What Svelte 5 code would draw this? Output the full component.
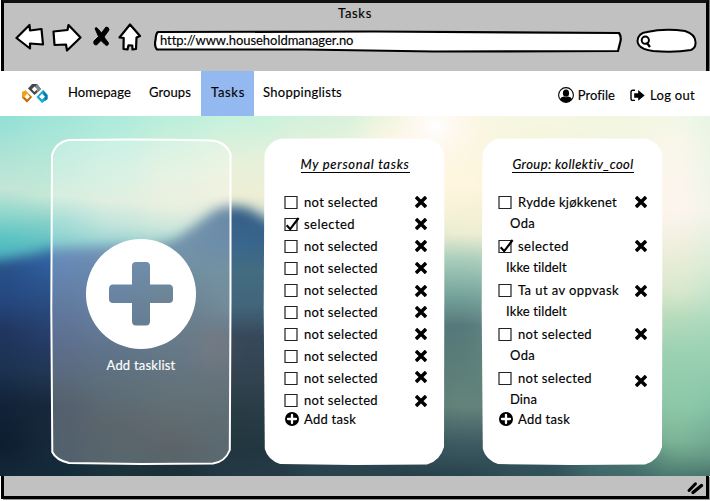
<script>
  const personal = [
    ['not selected', false, 0], ['selected', true, 0], ['not selected', false, 0],
    ['not selected', false, -0.5], ['not selected', false, 0.5], ['not selected', false, 0],
    ['not selected', false, 0], ['not selected', false, 0], ['not selected', false, -1], ['not selected', false, 1]
  ].map(([label, done, dy]) => ({ label, done, dy, width: done ? 51 : 74 }));

  const group = [
    { label: 'Rydde kjøkkenet', width: 99, who: 'Oda', whoWidth: 25, left: 28, dy: 0 },
    { label: 'selected', width: 51, done: true, who: 'Ikke tildelt', whoWidth: 61, left: 24, dy: 0 },
    { label: 'Ta ut av oppvask', width: 101, who: 'Ikke tildelt', whoWidth: 61, left: 24, dy: 1 },
    { label: 'not selected', width: 74, who: 'Oda', whoWidth: 25, left: 28, dy: 0 },
    { label: 'not selected', width: 74, who: 'Dina', whoWidth: 27, left: 28, dy: 3 }
  ];

  // Vertical colour ramps of the blurred landscape: [x, width, [[y, colour], ...]]
  const sky = [
    [-60, 85, [[0, '#91dfd5'], [45, '#b2e3d5'], [72, '#c3e5d8'], [95, '#94d8ce'], [120, '#5dc5c3'], [145, '#48afbd']]],
    [25, 60, [[0, '#9fe5d9'], [55, '#bae8d7'], [80, '#c8e8d5'], [105, '#88d1c9'], [130, '#5dbfc0']]],
    [85, 60, [[0, '#acebdc'], [55, '#c9eddc'], [85, '#d6ead5'], [108, '#aedbd0'], [130, '#75c4c0']]],
    [145, 60, [[0, '#bbefdc'], [60, '#e0efd9'], [90, '#e4ead5'], [110, '#bfe0cf'], [130, '#82c5c0']]],
    [205, 80, [[0, '#c6f2dd'], [45, '#e6f0da'], [80, '#eeeed4'], [100, '#c9dfcf']]],
    [285, 80, [[0, '#d5f1dc'], [90, '#fff4d8'], [150, '#7ba9a0'], [210, '#4c6f76'], [360, '#29434d']]],
    [365, 65, [[0, '#f0f6e0'], [30, '#fff7e7'], [100, '#fff3d8'], [143, '#a9cebc'], [175, '#7ba9a0'], [210, '#55787b'], [290, '#536f6d'], [325, '#38535b'], [360, '#263f49']]],
    [430, 65, [[0, '#faf7e4'], [70, '#fff6de'], [118, '#ecedd1'], [143, '#a9cebc'], [175, '#7ba9a0'], [210, '#55787b'], [245, '#5b7d78'], [290, '#64837b'], [325, '#405d63'], [360, '#29434d']]],
    [495, 80, [[0, '#f6f7e1'], [120, '#f4efd2'], [180, '#8ab5a2'], [300, '#547a75'], [340, '#314f59'], [360, '#30505a']]],
    [575, 75, [[0, '#f2f6e1'], [120, '#f5f1df'], [210, '#b1d6b3'], [310, '#78ac91'], [345, '#456e6d'], [360, '#416969']]],
    [650, 48, [[0, '#f3f8e6'], [30, '#fcf7ec'], [95, '#fff5ef'], [130, '#f0efdd'], [175, '#dce9cd'], [205, '#b4dabb'], [240, '#98d1b2'], [290, '#8ecaa9'], [325, '#7eb898'], [345, '#639681'], [360, '#4a7c72']]],
    [698, 80, [[0, '#e4f4e4'], [95, '#f0f4e8'], [150, '#d6ebd6'], [210, '#a7d8bb'], [290, '#84c2a5'], [340, '#659987'], [360, '#467168']]]
  ];
  const hill = [
    [-60, 85, [[130, '#35679b'], [150, '#295088'], [185, '#244680'], [215, '#20345d'], [250, '#1b3352'], [290, '#112138'], [330, '#0e1c2f'], [360, '#13283a']]],
    [25, 60, [[125, '#3c6faa'], [150, '#2f5e9d'], [190, '#294b7e'], [230, '#253b66'], [260, '#203650'], [290, '#18283b'], [360, '#132a3a']]],
    [85, 60, [[120, '#4673a2'], [150, '#3b628f'], [200, '#31547a'], [235, '#284462'], [270, '#263d4c'], [310, '#233038'], [360, '#1b333b']]],
    [145, 60, [[110, '#426f90'], [150, '#416a86'], [190, '#385668'], [240, '#30495b'], [290, '#2c3e45'], [330, '#252f37'], [360, '#193039']]],
    [205, 90, [[85, '#345b83'], [125, '#38658d'], [155, '#436c80'], [190, '#42657a'], [220, '#37485b'], [265, '#32424e'], [300, '#273b44'], [335, '#213640'], [360, '#233a45']]],
    [295, 160, [[100, '#345b83'], [190, '#42657a'], [220, '#37485b'], [360, '#29434d']]]
  ];

  // Spreads the letters so that a label takes its designed width.
  function fit(node, width) {
    const adjust = () => {
      node.style.letterSpacing = '0px';
      const extra = width - node.getBoundingClientRect().width;
      node.style.letterSpacing = extra / node.textContent.length + 'px';
    };
    adjust();
    document.fonts?.ready.then(adjust);
  }
</script>

{#snippet label(text, width)}<span class="label" use:fit={width}>{text}</span>{/snippet}

{#snippet checkbox(done)}
  <svg class="box" width="16" height="15" viewBox="0 0 16 15">
    <path d="M1 14V1.500H13V13.500H.5" fill="#fff" stroke="#222" stroke-width="1.2" />
    {#if done}<path d="M2.700 8.200 6.200 12.200 14.600 1" fill="none" stroke="#000" stroke-width="2.1" />{/if}
  </svg>
{/snippet}

{#snippet cross(dy)}
  <svg class="cross" width="12" height="12" viewBox="0 0 12 12" style:margin-top="{dy * 2}px">
    <path d="M2.2 2.2 9.8 9.8M9.8 2.2 2.2 9.8" stroke="#000" stroke-width="3.5" stroke-linecap="square" />
  </svg>
{/snippet}

{#snippet addTask()}
  <div class="add">
    <svg width="14" height="14" viewBox="0 0 14 14"><circle cx="7" cy="7" r="7" /><path d="M7 3v8M3 7h8" stroke="#fff" stroke-width="2.3" stroke-linecap="round" /></svg>
    {@render label('Add task', 52)}
  </div>
{/snippet}

{#snippet sheet()}
  <svg class="sheet" viewBox="0 0 180 328"><path d="M16 .800Q90 -.3 164 .800Q177 4 180.300 16L180.300 160 180 309Q176 323 163 326.500L90 327 16 326Q4 322 .8 311L-.3 170 .5 16Q4 4 16 .800Z" fill="#fff" /></svg>
{/snippet}

{#snippet strips(list, id)}
  {#each list as [x, w, stops], i}
    <linearGradient id="{id}{i}" gradientUnits="userSpaceOnUse" x1="0" y1="0" x2="0" y2="360">
      {#each stops as [y, c]}<stop offset={y / 360} stop-color={c} />{/each}
    </linearGradient>
    <rect {x} y="-40" width={w + 1} height="440" fill="url(#{id}{i})" />
  {/each}
{/snippet}

<div class="window">
  <header>
    <div class="title">{@render label('Tasks', 34)}</div>
    <div class="tools">
      <svg class="arrows" width="128" height="30" viewBox="0 0 128 30" stroke="#000" stroke-width="2.2" stroke-linejoin="round" fill="#fff">
        <path d="M1.5 15 14.5 2 15 7.5 26.5 6 28 21.5 15 20.5 15 25.5Z" />
        <path d="M38.5 8.5 52.5 7 53.5 2 65.5 14.5 52 27.5 51 21.5 39.5 22Z" />
        <path d="M80 5.5Q81 3.5 83 6L86.5 10 91 4Q94 4 94 7L89 14 93.5 20Q93 24 90 21.5L86 17.5 81.5 22Q78 22 79 18L83.5 13.5Z" fill="#000" stroke-width="1" />
        <path d="M115 1.5 125 13 121.5 14.5 121 26 117.5 26.5 117.3 22.5 113.5 22.3 112.5 26.5 108.5 26 108.7 15 104.5 14.5Z" />
      </svg>
      <div class="address">
        <svg class="shape" width="470" height="24" viewBox="0 0 470 24"><path d="M4 2 220 1.5 465 3Q468 7 466 13L464 21 280 21.5 150 19.5 3 19.5Q0 16 1.5 10Q2 3 4 2Z" fill="#fff" stroke="#000" stroke-width="2.2" /></svg>
        {@render label('http://www.householdmanager.no', 193)}
      </div>
      <svg class="search" width="61" height="26" viewBox="0 0 61 26" fill="#fff" stroke="#000" stroke-width="2">
        <path d="M11 4Q29 0 49 3Q59 6 59.5 14Q60 20 55 22Q38 25 17 23Q2 21 1.5 13Q2 5 11 4Z" />
        <circle cx="9.3" cy="12.2" r="3.6" /><path d="M10.5 14.5 14 19" stroke-width="2.3" />
      </svg>
    </div>
  </header>

  <nav>
    <svg class="logo" width="26" height="19" viewBox="0 0 26 19">
      <path d="M0 8 3.5 6.2 10 13 5 18.5 0 14Z" fill="#f0a01c" /><path d="M0 13 5 18.5 10 13 7 10.5 5 14Z" fill="#c96805" />
      <path d="M6 4.5 10 0H15L19 5 12.5 11Z" fill="#424a4c" /><path d="M15 0 19 5 15.5 8.5 13 3Z" fill="#858889" />
      <path d="M14.5 13 21 6 25.5 11V15L20 19Z" fill="#14a8d5" /><path d="M21 6 25.5 11V15L23 17Z" fill="#087da9" />
      <path d="M5 9.8 8 12.7 5 15.5 2.5 12.7Z M12.5 2.6 15.2 5.3 12.5 8 9.8 5.3Z M20 9.8 23 12.7 20 15.5 17.2 12.7Z" fill="#fff" />
    </svg>
    <a class="item">{@render label('Homepage', 63)}</a>
    <a class="item">{@render label('Groups', 42)}</a>
    <a class="item active">{@render label('Tasks', 34)}</a>
    <a class="item">{@render label('Shoppinglists', 79)}</a>
    <div class="user">
      <svg width="16" height="16" viewBox="0 0 16 16"><circle cx="8" cy="8" r="7.4" fill="#fff" stroke="#000" stroke-width="1.1" /><ellipse cx="8" cy="6.2" rx="3.1" ry="3.6" /><path d="M2 12Q3 9.8 6 9.6Q8 11 10 9.6Q13 9.8 14 12Q11.5 15.3 8 15.3T2 12Z" /></svg>
      {@render label('Profile', 37)}
      <svg class="exit" width="15" height="13" viewBox="0 0 15 13"><path d="M5 1.2H2.8Q1 1.2 1 3V9.5Q1 11.4 2.8 11.4H5" fill="none" stroke="#000" stroke-width="1.4" /><path d="M4.2 4.200H8.200V1L14.6 6.4 8.200 11.800V8.700H4.2Z" /></svg>
      {@render label('Log out', 45)}
    </div>
  </nav>

  <main>
    <svg class="scene" width="710" height="360" viewBox="0 0 710 360">
      <filter id="wide" filterUnits="userSpaceOnUse" x="-60" y="-40" width="830" height="440" color-interpolation-filters="sRGB"><feGaussianBlur stdDeviation="17 0" /></filter>
      <filter id="edge" filterUnits="userSpaceOnUse" x="-60" y="-40" width="830" height="460"><feGaussianBlur stdDeviation="6" /></filter>
      <radialGradient id="sun"><stop offset="0" stop-color="#fff" /><stop offset=".5" stop-color="#fff8ef" stop-opacity=".8" /><stop offset="1" stop-color="#fff8ef" stop-opacity="0" /></radialGradient>
      <radialGradient id="warm"><stop offset="0" stop-color="#796254" stop-opacity=".18" /><stop offset="1" stop-color="#796254" stop-opacity="0" /></radialGradient>
      <mask id="ridge"><path d="M-60 145 0 144 30 138 52 132 85 131 115 130 150 131 175 124 195 109 215 94 230 90 247 92 270 105 340 130 380 190 400 370-60 400Z" fill="#fff" filter="url(#edge)" /></mask>
      <g filter="url(#wide)">{@render strips(sky, 's')}</g>
      <g mask="url(#ridge)"><g filter="url(#wide)">{@render strips(hill, 'h')}</g></g>
      <circle cx="435" cy="10" r="46" fill="url(#sun)" />
      <ellipse cx="214" cy="232" rx="34" ry="30" fill="url(#warm)" />
    </svg>

    <section class="new">
      <svg class="sheet" viewBox="0 0 180 328"><path d="M18 2Q90 .6 161 2.500Q175 4 179.500 16L179.500 160 178.800 312Q174 324 162 325.500L90 326 18 325Q5 322 1.300 314L.3 170 1 17Q5 4 18 2Z" fill="#fff" fill-opacity=".26" stroke="#fff" stroke-width="2" /></svg>
      <svg class="plus" width="110" height="110" viewBox="0 0 110 110"><path fill-rule="evenodd" d="M55 0A55 55 0 1 1 55 110A55 55 0 1 1 55 0ZM50 23Q46 23 46 27V45.500H27Q23 45.500 23 50V60Q23 64 27 64H46V82Q46 86.500 50 86.500H60Q64 86.500 64 82V64H83Q87 64 87 60V50Q87 45.500 83 45.500H64V27Q64 23 60 23Z" fill="#fff" /></svg>
      {@render label('Add tasklist', 69)}
    </section>

    <section>
      {@render sheet()}
      <h2>{@render label('My personal tasks', 109)}</h2>
      {#each personal as t}
        <div class="row">{@render checkbox(t.done)}{@render label(t.label, t.width)}{@render cross(t.dy)}</div>
      {/each}
      {@render addTask()}
    </section>

    <section class="group">
      {@render sheet()}
      <h2>{@render label('Group: kollektiv_cool', 121)}</h2>
      {#each group as t}
        <div class="row">{@render checkbox(t.done)}{@render label(t.label, t.width)}{@render cross(t.dy)}</div>
        <div class="who" style:padding-left="{t.left}px">{@render label(t.who, t.whoWidth)}</div>
      {/each}
      {@render addTask()}
    </section>
  </main>

  <footer>
    <svg width="18" height="14" viewBox="0 0 18 14" stroke="#000" stroke-width="3" stroke-linecap="round"><path d="M3 9.500 9.500 2.800" /><path d="M7 11.500 15.500 4.500" stroke-width="3.400" /></svg>
  </footer>
</div>

<style>
  :global(body) { overflow: hidden; }
  .window { width: 710px; height: 501px; overflow: hidden; background: #fff; color: #000; font: 13px/16px Lato, "Open Sans", sans-serif; }
  svg { display: block; flex: none; }
  .label { display: inline-block; white-space: pre; flex: none; -webkit-text-stroke: .15px currentColor; }
  header { box-sizing: border-box; height: 71px; margin-left: 1px; width: 708px; background: #c1c1c1; border: solid #000; border-width: 3px 3px 0; border-top-color: #111; box-shadow: 2px 0 #777; }
  .title { display: flex; justify-content: center; padding-top: 2px; height: 17px; }
  .tools { display: flex; align-items: flex-start; padding-left: 11px; }
  .arrows { margin-top: 1px; }
  .address { position: relative; width: 470px; height: 24px; margin: 8px 0 0 11px; padding: 2px 0 0 6px; box-sizing: border-box; display: flex; align-items: flex-start; }
  .shape { position: absolute; left: 0; top: 0; }
  .address .label { position: relative; }
  .search { margin: 6px 0 0 12px; }
  nav { height: 45px; display: flex; background: #fff; width: 709px; }
  .logo { margin: 13px 10px 0 22px; }
  .item { padding: 13px 9px 0 10px; }
  .item + .item { padding-left: 9px; }
  .item:nth-of-type(2) { padding-right: 10px; }
  .item.active { background: #94b9f0; padding-left: 10px; }
  .user { display: flex; align-items: center; height: 48px; margin-left: auto; padding-right: 14px; }
  .user .label { margin-left: 4px; }
  .user .exit { margin-left: 15px; }
  .user .exit + .label { margin-left: 5px; }
  main { position: relative; display: flex; height: 360px; box-sizing: border-box; padding: 22px 0 0 51px; overflow: hidden; }
  .scene { position: absolute; inset: 0; }
  section { position: relative; width: 180px; height: 328px; margin-right: 38px; }
  section > * { position: relative; }
  .sheet { position: absolute; inset: 0; width: 180px; height: 328px; overflow: visible; }
  .new { display: flex; flex-direction: column; align-items: center; margin-right: 33px; color: #fff; }
  .plus { margin: 101px 0 8px; }
  h2 { font: italic 13px/16px Lato, sans-serif; margin: 0; padding: 18px 0 0 2px; height: 35px; text-align: center; }
  h2 .label { border-bottom: 1px solid #000; line-height: 15px; }
  .row, .add { height: 22px; display: flex; align-items: center; padding-left: 20px; }
  .box { margin-right: 4px; }
  .row .cross { margin-left: auto; margin-right: 17px; }
  .group .row, .group .add { padding-left: 16px; }
  .group .row .cross { margin-right: 15px; }
  .who { height: 22px; line-height: 20px; }
  section .add { height: 16px; padding-left: 21px; }
  .group .add { padding-left: 17px; }
  .add .label { margin-left: 5px; }
  footer { box-sizing: border-box; width: 708px; height: 23px; margin-left: 1px; background: #c1c1c1; border: solid #000; border-width: 0 3px 3px; box-shadow: 2px 1px #999; display: flex; justify-content: flex-end; padding: 5px 2px 0 0; }
</style>
